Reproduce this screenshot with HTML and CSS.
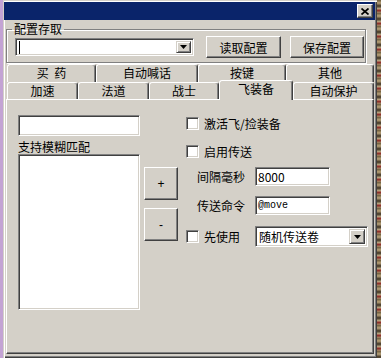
FILE: index.html
```html
<!DOCTYPE html>
<html lang="zh-CN">
<head>
    <meta charset="UTF-8">
    <title>飞装备</title>
    <link rel="stylesheet" href="styles.css">
</head>
<body>
    <div class="desk">
        <div class="edge-left"></div>

        <div class="window">
            <!-- Заголовок окна -->
            <div class="titlebar">
                <span class="close-btn">
                    <svg width="8" height="7" viewBox="0 0 8 7"><path d="M0.5 0.5 L7.5 6.5 M7.5 0.5 L0.5 6.5" stroke="#000" stroke-width="1.7"/></svg>
                </span>
            </div>

            <div class="client">
                <!-- Конфиг -->
                <fieldset class="group">
                    <legend>配置存取</legend>
                    <div class="combo combo-config">
                        <span class="combo-text"><span class="caret"></span></span>
                        <span class="combo-btn">
                            <svg width="7" height="4" viewBox="0 0 7 4"><polygon points="0,0 7,0 3.5,4" fill="#000"/></svg>
                        </span>
                    </div>
                    <button class="btn btn-load">读取配置</button>
                    <button class="btn btn-save">保存配置</button>
                </fieldset>

                <!-- Вкладки -->
                <div class="tabs">
                    <div class="tab-row back">
                        <div class="tab w89">买&nbsp;&nbsp;药</div>
                        <div class="tab w102">自动喊话</div>
                        <div class="tab w88">按键</div>
                        <div class="tab w88">其他</div>
                    </div>
                    <div class="tab-row front">
                        <div class="tab w71">加速</div>
                        <div class="tab w71">法道</div>
                        <div class="tab w70">战士</div>
                        <div class="tab w74 active">飞装备</div>
                        <div class="tab w81">自动保护</div>
                    </div>

                    <div class="tab-panel">
                        <div class="left-col">
                            <div class="edit name-edit"></div>
                            <div class="hint">支持模糊匹配</div>
                            <div class="listbox"></div>
                        </div>

                        <div class="mid-col">
                            <button class="btn sq-btn">+</button>
                            <button class="btn sq-btn">-</button>
                        </div>

                        <div class="right-col">
                            <div class="check-row">
                                <span class="checkbox"></span>
                                <span>激活飞/捡装备</span>
                            </div>
                            <div class="check-row row-2">
                                <span class="checkbox"></span>
                                <span>启用传送</span>
                            </div>
                            <div class="field-row row-3">
                                <span class="field-label">间隔毫秒</span>
                                <div class="edit small-edit">8000</div>
                            </div>
                            <div class="field-row row-4">
                                <span class="field-label">传送命令</span>
                                <div class="edit small-edit mono">@move</div>
                            </div>
                            <div class="use-row">
                                <span class="checkbox"></span>
                                <span class="use-label">先使用</span>
                                <div class="combo combo-scroll">
                                    <span class="combo-text">随机传送卷</span>
                                    <span class="combo-btn">
                                        <svg width="7" height="4" viewBox="0 0 7 4"><polygon points="0,0 7,0 3.5,4" fill="#000"/></svg>
                                    </span>
                                </div>
                            </div>
                        </div>
                    </div>
                </div>
            </div>
        </div>

        <div class="edge-right"></div>
    </div>
</body>
</html>
```

FILE: styles.css
```css
* {
    box-sizing: border-box;
}
body {
    margin: 0;
    width: 381px;
    height: 358px;
    overflow: hidden;
    font-family: "Liberation Sans", "Noto Sans CJK SC", sans-serif;
    font-size: 12px;
    color: #000;
    background-color: #c3a3d4;
}
.desk {
    display: flex;
    height: 358px;
}
.edge-left {
    width: 3px;
    background-color: #c3a3d4;
}
.edge-right {
    width: 4px;
    background: repeating-linear-gradient(180deg, #6b5a3a 0, #b8a27a 3px, #3d3222 6px, #c9b48c 9px, #8a2020 10px, #a08c66 13px);
}
.window {
    width: 374px;
    height: 358px;
    background-color: #d4d0c8;
    padding-top: 2px;
    box-shadow: inset 1px 1px #d4d0c8, inset 2px 2px #fff, inset -1px -1px #404040, inset -2px -2px #808080;
}
.titlebar {
    height: 18px;
    margin: 0 2px 0 1px;
    background-color: #0a246a;
    display: flex;
    justify-content: flex-end;
    align-items: center;
    padding-right: 2px;
}
.close-btn {
    width: 16px;
    height: 14px;
    background-color: #d4d0c8;
    border: 1px solid;
    border-color: #fff #404040 #404040 #fff;
    box-shadow: inset -1px -1px #808080;
    display: flex;
    align-items: center;
    justify-content: center;
}

/* клиентская часть */
.client {
    padding-left: 3px;
}
.group {
    margin: 2px 0 0 0;
    width: 359px;
    padding: 0 1px 4px 5px;
    border: 1px solid #808080;
    box-shadow: inset 1px 1px #fff, 1px 1px #fff;
    display: flex;
    align-items: center;
}
.group legend {
    padding: 0 2px;
    line-height: 14px;
    font-family: "Noto Sans CJK SC", sans-serif;
}
.btn {
    font-family: "Noto Sans CJK SC", sans-serif;
    font-size: 12px;
    background-color: #d4d0c8;
    border: 1px solid;
    border-color: #fff #404040 #404040 #fff;
    box-shadow: inset -1px -1px #808080;
    padding: 0;
    color: #000;
}
.btn-load {
    width: 75px;
    height: 22px;
    margin-left: 12px;
}
.btn-save {
    width: 74px;
    height: 22px;
    margin-left: 9px;
}

/* комбобоксы и поля */
.combo, .edit, .listbox, .checkbox {
    background-color: #fff;
    border: 1px solid;
    border-color: #808080 #fff #fff #808080;
    box-shadow: inset 1px 1px #404040, inset -1px -1px #d4d0c8;
}
.combo {
    display: flex;
    padding: 2px;
}
.combo-text {
    flex: 1;
    display: flex;
    align-items: center;
    padding-left: 1px;
    font-family: "Noto Sans CJK SC", sans-serif;
}
.caret {
    width: 1px;
    height: 13px;
    background-color: #000;
}
.combo-btn {
    background-color: #d4d0c8;
    border: 1px solid;
    border-color: #d4d0c8 #404040 #404040 #d4d0c8;
    box-shadow: inset 1px 1px #fff, inset -1px -1px #808080;
    display: flex;
    align-items: center;
    justify-content: center;
}
.combo-config {
    width: 179px;
    height: 18px;
    margin-left: 3px;
}
.combo-config .combo-btn {
    width: 15px;
}
.combo-scroll {
    width: 113px;
    height: 21px;
}
.combo-scroll .combo-btn {
    width: 16px;
}

/* вкладки */
.tabs {
    margin-top: 1px;
    width: 368px;
    font-family: "Noto Sans CJK SC", sans-serif;
}
.tab-row {
    display: flex;
    padding-left: 1px;
}
.tab-row.back {
    height: 18px;
}
.tab-row.front {
    height: 17px;
}
.tab {
    height: 100%;
    border: 1px solid;
    border-bottom: none;
    border-color: #fff #404040 transparent #fff;
    border-radius: 3px 3px 0 0;
    box-shadow: inset -1px 0 #808080;
    background-color: #d4d0c8;
    text-align: center;
    line-height: 15px;
}
.tab.active {
    height: 20px;
    margin-top: -2px;
    position: relative;
    z-index: 1;
    line-height: 16px;
}
.w70 { width: 70px; }
.w71 { width: 71px; }
.w74 { width: 74px; }
.w81 { width: 81px; }
.w88 { width: 88px; }
.w89 { width: 89px; }
.w102 { width: 102px; }

.tab-panel {
    height: 255px;
    border: 1px solid;
    border-color: #fff #404040 #404040 #fff;
    box-shadow: inset -1px -1px #808080;
    padding: 15px 0 0 11px;
    display: flex;
    align-items: flex-start;
}
.left-col {
    width: 122px;
}
.name-edit {
    height: 21px;
}
.hint {
    margin-top: 4px;
    line-height: 14px;
}
.listbox {
    height: 156px;
}
.mid-col {
    margin-left: 4px;
    padding-top: 52px;
    display: flex;
    flex-direction: column;
    gap: 8px;
}
.sq-btn {
    width: 34px;
    height: 33px;
    font-family: "Liberation Sans", sans-serif;
}
.right-col {
    margin-left: 8px;
    padding-top: 2px;
    width: 182px;
}
.check-row {
    display: flex;
    align-items: center;
    gap: 5px;
    height: 13px;
}
.checkbox {
    width: 13px;
    height: 13px;
    flex: none;
}
.row-2 {
    margin-top: 15px;
}
.field-row {
    display: flex;
    align-items: center;
    height: 19px;
}
.field-label {
    width: 58px;
    margin-left: 11px;
}
.small-edit {
    width: 75px;
    height: 19px;
    padding-left: 2px;
    line-height: 17px;
}
.mono {
    font-family: "Liberation Mono", monospace;
    font-size: 10px;
}
.row-3 {
    margin-top: 9px;
}
.row-4 {
    margin-top: 10px;
}
.use-row {
    margin-top: 11px;
    display: flex;
    align-items: center;
}
.use-label {
    margin-left: 5px;
    width: 51px;
}
```
